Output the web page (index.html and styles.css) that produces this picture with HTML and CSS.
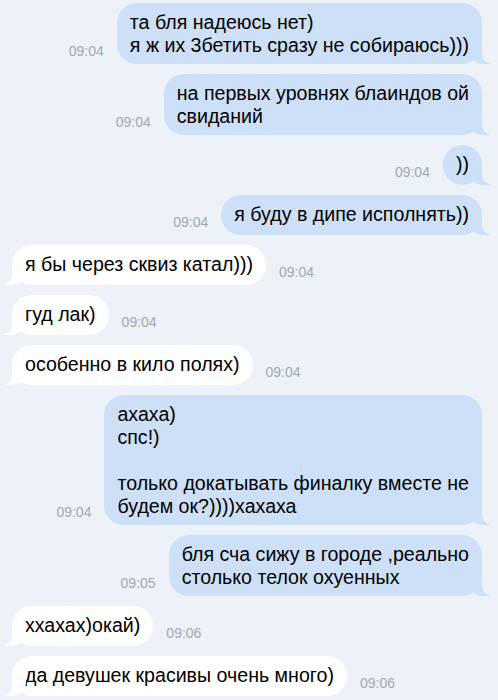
FILE: index.html
```html
<!DOCTYPE html>
<html lang="ru">

<head>
    <meta charset="UTF-8">
    <meta name="viewport" content="width=device-width, initial-scale=1.0">
    <title>Диалог</title>
    <link rel="stylesheet" href="styles.css">
</head>

<body>
    <div class="chat">
        <div class="row out">
            <span class="time">09:04</span>
            <div class="bubble">та бля надеюсь нет)<br>я ж их 3бетить сразу не собираюсь)))</div>
        </div>
        <div class="row out">
            <span class="time">09:04</span>
            <div class="bubble">на первых уровнях блаиндов ой<br>свиданий</div>
        </div>
        <div class="row out">
            <span class="time">09:04</span>
            <div class="bubble">))</div>
        </div>
        <div class="row out">
            <span class="time">09:04</span>
            <div class="bubble">я буду в дипе исполнять))</div>
        </div>
        <div class="row in">
            <div class="bubble">я бы через сквиз катал)))</div>
            <span class="time">09:04</span>
        </div>
        <div class="row in">
            <div class="bubble">гуд лак)</div>
            <span class="time">09:04</span>
        </div>
        <div class="row in">
            <div class="bubble">особенно в кило полях)</div>
            <span class="time">09:04</span>
        </div>
        <div class="row out">
            <span class="time">09:04</span>
            <div class="bubble">ахаха)<br>спс!)<div class="blank"></div>только докатывать финалку вместе не<br>будем ок?))))хахаха</div>
        </div>
        <div class="row out">
            <span class="time">09:05</span>
            <div class="bubble">бля сча сижу в городе ,реально<br>столько телок охуенных</div>
        </div>
        <div class="row in">
            <div class="bubble">ххахах)окай)</div>
            <span class="time">09:06</span>
        </div>
        <div class="row in">
            <div class="bubble">да девушек красивы очень много)</div>
            <span class="time">09:06</span>
        </div>
    </div>
</body>

</html>
```

FILE: styles.css
```css
body {
    margin: 0;
    padding: 0;
    background-color: #edf2f9;
    font-family: "Liberation Sans", Arial, sans-serif;
    color: #000;
}

.chat {
    display: flex;
    flex-direction: column;
    gap: 10px;
    padding-top: 3px;
}

.row {
    display: flex;
    align-items: flex-end;
    gap: 13px;
}

.row.out {
    justify-content: flex-end;
    padding-right: 16px;
}

.row.in {
    padding-left: 12px;
}

.time {
    font-size: 14px;
    line-height: 16px;
    color: #a2a8b0;
    padding-bottom: 5px;
}

.bubble {
    position: relative;
    box-sizing: border-box;
    min-height: 40px;
    padding: 8px 13px 7px;
    border-radius: 20px;
    font-size: 19.6px;
    line-height: 23px;
    white-space: nowrap;
}

.out .bubble {
    background-color: #cde0f7;
}

.in .bubble {
    background-color: #fff;
}

.blank {
    height: 23px;
}

/* хвостики пузырей */
.bubble::before,
.bubble::after {
    content: "";
    position: absolute;
    bottom: 0;
    height: 18px;
}

.out .bubble::before {
    right: -8px;
    width: 22px;
    background-color: #cde0f7;
    border-bottom-left-radius: 16px 14px;
}

.out .bubble::after {
    right: -12px;
    width: 12px;
    background-color: #edf2f9;
    border-bottom-left-radius: 10px;
}

.in .bubble::before {
    left: -8px;
    width: 22px;
    background-color: #fff;
    border-bottom-right-radius: 16px 14px;
}

.in .bubble::after {
    left: -12px;
    width: 12px;
    background-color: #edf2f9;
    border-bottom-right-radius: 10px;
}
```
